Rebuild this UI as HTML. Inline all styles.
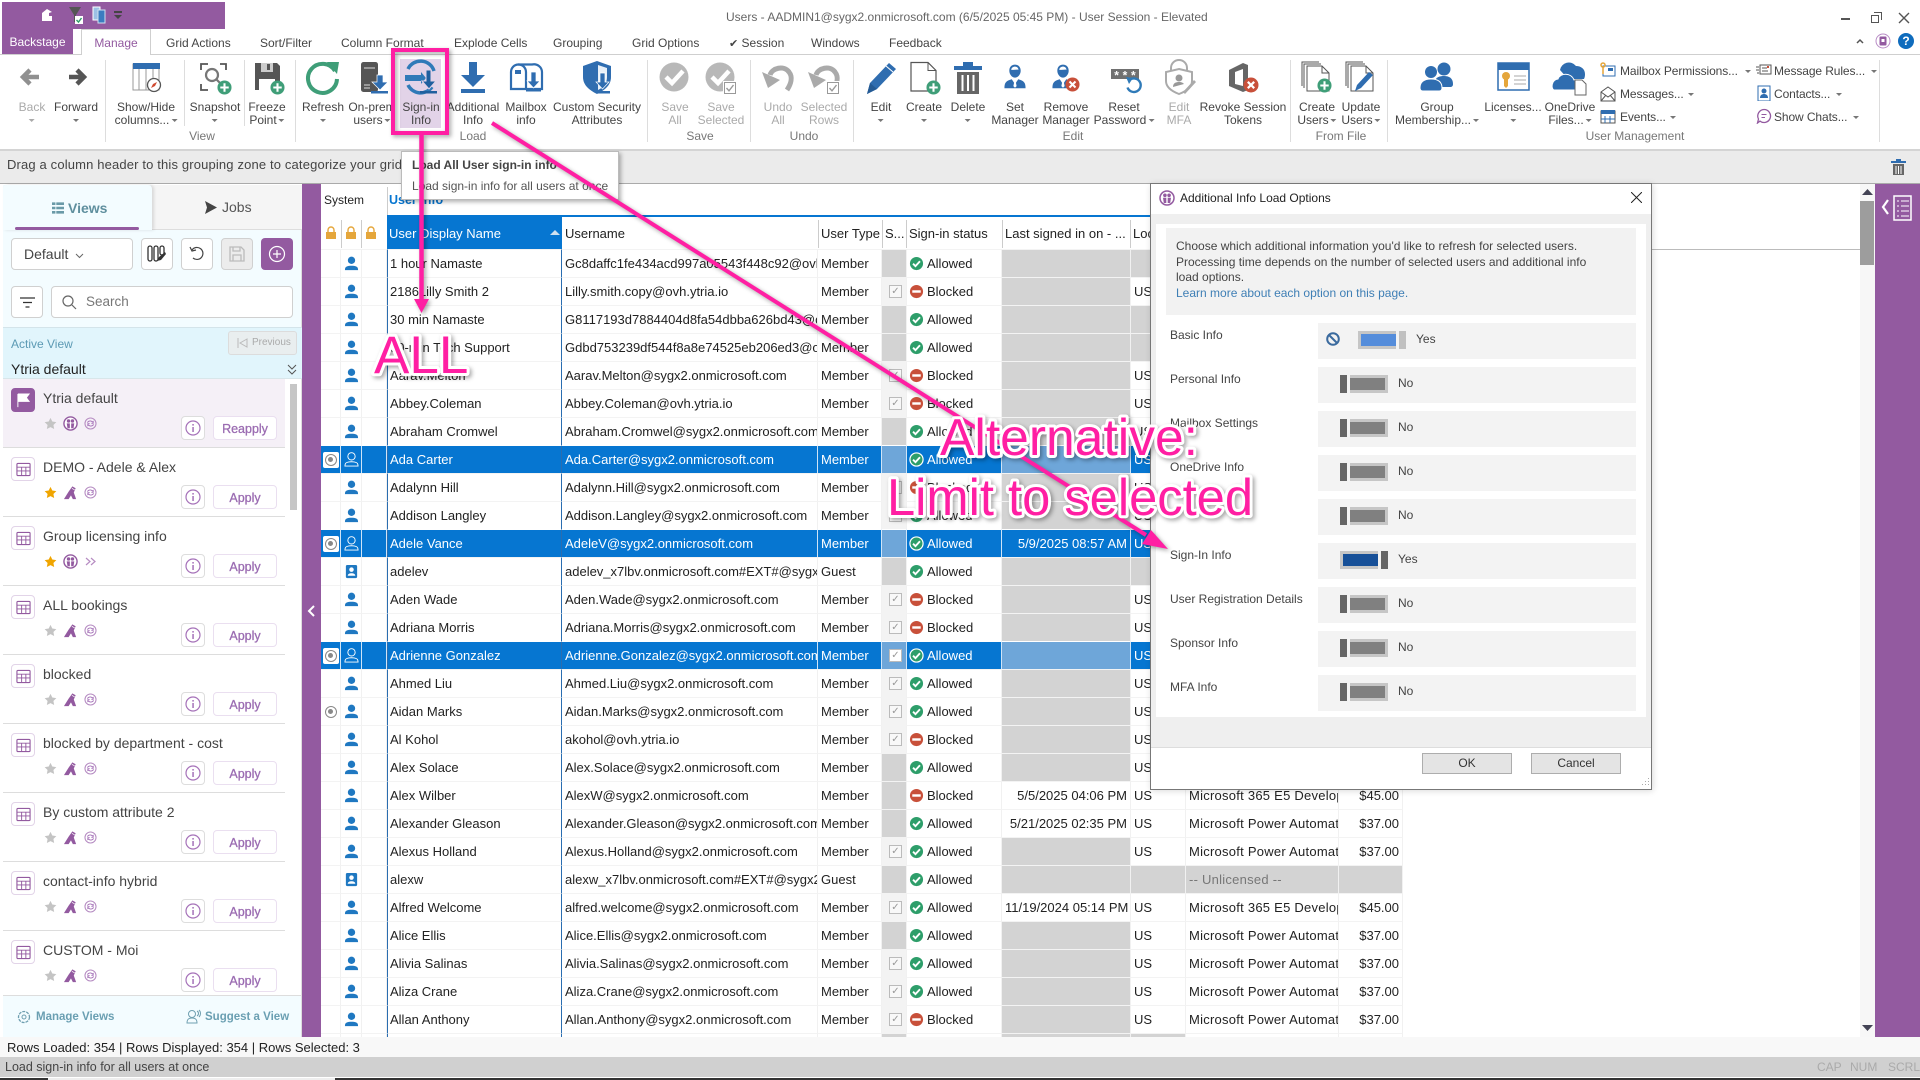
<!DOCTYPE html>
<html><head><meta charset="utf-8"><title>Users - User Session</title>
<style>
*{box-sizing:border-box}
html,body{margin:0;padding:0;width:1920px;height:1080px;overflow:hidden;background:#fff;font-family:"Liberation Sans",sans-serif;color:#333}
.a{position:absolute}
.t{position:absolute;font-size:12px;white-space:nowrap;color:#444;line-height:14px;letter-spacing:-.1px}
.tab{position:absolute;top:36px;font-size:12px;color:#444;line-height:14px;white-space:nowrap}
.l{position:absolute;top:101px;transform:translateX(-50%);text-align:center;line-height:13px;font-size:12px;color:#444;white-space:nowrap}
.d{color:#aaa}
.cr{display:inline-block;width:0;height:0;border:3px solid transparent;border-top:3px solid #777;border-bottom:0;margin-left:2px;vertical-align:middle}
.ic{position:absolute;top:58px;width:40px;height:40px}
.sep{position:absolute;top:60px;height:82px;width:1px;background:#ddd}
.gl{position:absolute;top:129px;font-size:12px;color:#777;transform:translateX(-50%);line-height:14px;white-space:nowrap}
.r{display:grid;grid-template-columns:20px 21px 25px 175px 256px 64px 25px 95px 129px 55px 153px 64px;height:28px;font-size:13px;color:#222}
.r p{margin:0;padding:0 3px;line-height:27px;white-space:nowrap;overflow:hidden;position:relative;border-right:1px solid #f1f1f1;border-top:1px solid #f3f3f3}
.r p:nth-child(4){border-left:1px solid #2a6db0;border-right:1px solid #2a6db0;padding-left:2px}
.r p:nth-child(11){letter-spacing:.25px}
.r svg{position:absolute;width:15px;height:15px;left:3px;top:6px}
.r .st{padding-left:20px}
.r .st svg{left:2px}
.r .g{background:#d3d3d3}
.r .cb{background:#f3f3f3}
.r .cb i{position:absolute;left:7px;top:7px;width:13px;height:13px;border:1px solid #bbb;background:#f8f8f8;font:normal 10px/11px "DejaVu Sans",sans-serif;color:#999;text-align:center}
.r .rt{text-align:right}
.r .pi{fill:#1f78c1}
.s{color:#fff!important}
.s p{background:#0676d1;color:#fff;border-top:1px solid #fff;border-right:1px solid #cfe4f7}
.s .g,.s .cb{background:#6ea6d9}
.s .pi{fill:none;stroke:#fff}
.s .cb i{background:#fff}
.ra{position:absolute;left:2px;top:6px;width:16px;height:16px;background:#fff;border-radius:2px}
.ra b{position:absolute;left:2px;top:2px;width:12px;height:12px;border:1.5px solid #888;border-radius:50%}
.ra b:after{content:"";position:absolute;left:2px;top:2px;width:5px;height:5px;background:#888;border-radius:50%}
.btn{position:absolute;border:1px solid #d0d0d0;border-radius:4px;background:#fff}
.it{position:absolute;left:3px;width:282px;height:69px;border-bottom:1px solid #ddd;background:#fff}
.it .ib{position:absolute;left:8px;top:9px;width:24px;height:24px;border:1px solid #e2d4e8;border-radius:4px;background:#fff}
.it .ib svg{position:absolute;left:4px;top:4px;width:15px;height:15px}
.it .ti{position:absolute;left:40px;top:11px;font-size:14px;line-height:17px;color:#444;white-space:nowrap}
.it .s1,.it .s3{position:absolute;top:38px;width:13px;height:13px}
.it .s2{position:absolute;top:37px;width:15px;height:15px}
.it .s1{left:41px}.it .s2{left:60px}.it .s3{left:81px}
.it .nf{position:absolute;left:178px;top:37px;width:24px;height:24px;border:1px solid #ddd;border-radius:4px;background:#fff}
.it .nf svg{position:absolute;left:3px;top:3px;width:16px;height:16px}
.it .ap{position:absolute;left:210px;top:37px;width:64px;height:24px;border:1px solid #eadff0;border-radius:4px;background:#fff;text-align:center;color:#9b6cb2;font-size:12.500px;-webkit-text-stroke:.3px #9b6cb2;line-height:24px}
.lbl{position:absolute;left:1170px;font-size:12px;color:#444;line-height:14px;white-space:nowrap}
.box{position:absolute;left:1318px;width:318px;height:36px;background:#f3f3f3}
.ho{position:absolute;left:22px;top:8px;width:7px;height:18px;background:#666}
.tr{position:absolute;left:32px;top:8px;width:38px;height:18px;background:#c6c6c6}
.tr i{position:absolute;left:0;top:3px;width:35px;height:12px;background:#808080}
.val{position:absolute;left:80px;top:9px;font-size:12px;line-height:14px;color:#444}
.sm{position:absolute;width:16px;height:16px}
</style></head><body>
<svg width="0" height="0" style="position:absolute">
<defs>
<symbol id="u" viewBox="0 0 16 16"><circle cx="8" cy="4.600" r="3.900"/><path d="M1 15c0-2 .5-3.200 2-3.800 1.400-.6 3-.8 5-.8s3.600.2 5 .8c1.500.6 2 1.800 2 3.800z"/></symbol>
<symbol id="gu" viewBox="0 0 16 16"><rect x="2" y="1" width="12" height="14" rx="1.500" fill="#1f78c1"/><circle cx="8" cy="6" r="2.400" fill="#fff"/><path d="M4 12.500c0-2 2-2.700 4-2.700s4 .7 4 2.700z" fill="#fff"/></symbol>
<symbol id="ok" viewBox="0 0 16 16"><circle cx="8" cy="8" r="7" fill="#2e9e6a"/><path d="M4.300 8.200l2.600 2.600 4.800-5.200" fill="none" stroke="#fff" stroke-width="2"/></symbol>
<symbol id="oks" viewBox="0 0 16 16"><circle cx="8" cy="8" r="7" fill="#2e9e6a" stroke="#fff" stroke-width="1.300"/><path d="M4.300 8.200l2.600 2.600 4.800-5.200" fill="none" stroke="#fff" stroke-width="2"/></symbol>
<symbol id="bl" viewBox="0 0 16 16"><circle cx="8" cy="8" r="7" fill="#c8503a"/><rect x="3.500" y="6.700" width="9" height="2.600" fill="#fff"/></symbol>
<symbol id="star" viewBox="0 0 16 16"><path d="M8 1l2.200 4.600 5 .7-3.600 3.500.9 5L8 12.400l-4.500 2.400.9-5L.8 6.300l5-.7z"/></symbol>
<symbol id="pen" viewBox="0 0 16 16"><path d="M1 15L6 7 10 1.500l3.500 2L11.500 8l2.500 7h-3.500L8.500 11 6 15z" fill="#935aa0"/><path d="M9.500 3.500l3 1.800" stroke="#fff" stroke-width=".7"/></symbol>
<symbol id="sy" viewBox="0 0 16 16"><circle cx="8" cy="8" r="6.800" fill="none" stroke="#b68cc2" stroke-width="1.300"/><path d="M4.300 7c.6-2 4-3 6-1l1-.6v2.400H9M11.700 9c-.6 2-4 3-6 1l-1 .6V8.200H7" fill="none" stroke="#a571b8" stroke-width="1.100"/></symbol>
<symbol id="pc" viewBox="0 0 16 16"><circle cx="8" cy="8" r="7" fill="#fff" stroke="#935aa0" stroke-width="1.500"/><circle cx="5.900" cy="5.300" r="1.800" fill="#935aa0"/><circle cx="10.100" cy="5.300" r="1.800" fill="#935aa0"/><path d="M4 7.800h3.300v5.200H4.800zM8.700 7.800H12l-.8 5.200H8.700z" fill="#935aa0"/></symbol>
<symbol id="tb" viewBox="0 0 16 16"><rect x="1" y="1.500" width="14" height="13" rx="1" fill="none" stroke="#935aa0" stroke-width="1.200"/><path d="M1 5.500h14M1 9.500h14M6 5.500v9M10.500 5.500v9" stroke="#935aa0" fill="none"/></symbol>
<symbol id="nfo" viewBox="0 0 16 16"><circle cx="8" cy="8" r="7" fill="none" stroke="#a571b8" stroke-width="1.200"/><rect x="7.300" y="7" width="1.500" height="5" fill="#a571b8"/><rect x="7.300" y="4" width="1.500" height="1.600" fill="#a571b8"/></symbol>
<symbol id="plus" viewBox="0 0 16 16"><circle cx="8" cy="8" r="7.500" fill="#3f9e78"/><path d="M8 3.500v9M3.500 8h9" stroke="#fff" stroke-width="2.200"/></symbol>
<symbol id="rx" viewBox="0 0 16 16"><circle cx="8" cy="8" r="7.500" fill="#c8503a"/><path d="M4.800 4.800l6.400 6.400M11.200 4.800l-6.400 6.400" stroke="#fff" stroke-width="2.200"/></symbol>
<symbol id="mn" viewBox="0 0 32 32"><path d="M16 2c4.500 0 7 3.200 7 7.500 0 4-3 8.500-7 8.500s-7-4.500-7-8.500C9 5.200 11.500 2 16 2zm0 2.500c-2.500 0-4.300 1.500-4.700 3.800 3.500.4 6.500-.3 9 0C20 6 18.500 4.500 16 4.500z" fill="#2f6db0"/><path d="M3 31c0-7 2-9 9-11l4 6 4-6c7 2 9 4 9 11z" fill="#2f6db0"/><path d="M14.500 20.500h3l-.5 3 1 5-2 2-2-2 1-5z" fill="#fff"/></symbol>
<symbol id="ck" viewBox="0 0 12 12"><rect x=".5" y=".5" width="11" height="11" fill="#fff" stroke="#999"/><path d="M2.500 6l2.500 2.800L9.500 3" fill="none" stroke="#999" stroke-width="1.400"/></symbol>
</defs>
</svg>

<!-- Title / tabs -->
<div class="a" style="left:2px;top:2px;width:223px;height:27px;background:#935aa0"></div>
<svg class="a" style="left:40px;top:6px" width="14" height="16"><path d="M2 15V7l5-4 5 3-3 1v3l3 0v5z" fill="#fff"/></svg>
<svg class="a" style="left:68px;top:5px" width="16" height="20"><path d="M1 2h12L8 10v7H6v-7z" fill="#555"/><rect x="7" y="11" width="8" height="8" fill="#fff"/><path d="M8.500 15l2 2 3-4" stroke="#2e9e6a" fill="none" stroke-width="1.400"/></svg>
<svg class="a" style="left:92px;top:6px" width="16" height="18"><rect x="1" y="1" width="7" height="13" fill="#9cc0e5" stroke="#fff"/><rect x="6" y="4" width="7" height="13" fill="#3b7cc0" stroke="#cfe0f0"/></svg>
<div class="a" style="left:114px;top:11px;width:8px;height:2px;background:#444"></div>
<div class="a" style="left:114px;top:15px;width:0;height:0;border:4px solid transparent;border-top:4px solid #444"></div>
<div class="a" style="left:726px;top:10px;width:468px;text-align:center;font-size:12px;line-height:14px;color:#666;white-space:nowrap">Users - AADMIN1@sygx2.onmicrosoft.com (6/5/2025 05:45 PM) - User Session - Elevated</div>

<div class="a" style="left:2px;top:29px;width:71px;height:25px;background:#935aa0;color:#fff;font-size:12px;line-height:26px;text-align:center">Backstage</div>
<div class="a" style="left:0;top:54px;width:1920px;height:1px;background:#cfcfcf"></div>
<div class="a" style="left:81px;top:29px;width:70px;height:26px;background:#fff;border:1px solid #cfcfcf;border-bottom:0;color:#935aa0;font-size:12px;line-height:27px;text-align:center">Manage</div>
<div class="tab" style="left:166px">Grid Actions</div>
<div class="tab" style="left:260px">Sort/Filter</div>
<div class="tab" style="left:341px">Column Format</div>
<div class="tab" style="left:454px">Explode Cells</div>
<div class="tab" style="left:553px">Grouping</div>
<div class="tab" style="left:632px">Grid Options</div>
<div class="tab" style="left:729px"><span style="font-family:'DejaVu Sans';font-size:11px">✔</span> Session</div>
<div class="tab" style="left:811px">Windows</div>
<div class="tab" style="left:889px">Feedback</div>

<!-- window buttons -->
<div class="a" style="left:1841px;top:18px;width:9px;height:2px;background:#555"></div>
<div class="a" style="left:1871px;top:15px;width:8px;height:8px;border:1px solid #555;background:#fff"></div>
<div class="a" style="left:1874px;top:12px;width:8px;height:8px;border:1px solid #555;border-left:0;border-bottom:0"></div>
<svg class="a" style="left:1898px;top:12px" width="12" height="12"><path d="M1 1l10 10M11 1L1 11" stroke="#555" stroke-width="1.400"/></svg>
<svg class="a" style="left:1856px;top:38px" width="8" height="6"><path d="M1 5l3-3 3 3" stroke="#555" fill="none" stroke-width="1.500"/></svg>
<svg class="a" style="left:1875px;top:33px" width="16" height="16"><circle cx="8" cy="8" r="7" fill="#fff" stroke="#b98cc6"/><rect x="4.500" y="3.500" width="7" height="9" rx="1" fill="#935aa0"/><rect x="6.500" y="6" width="3" height="3" fill="#fff"/></svg>
<div class="a" style="left:1898px;top:33px;width:16px;height:16px;border-radius:50%;background:#0f6cbd;color:#fff;font-size:12px;font-weight:bold;line-height:16px;text-align:center">?</div>

<!-- Ribbon separators -->
<div class="sep" style="left:105px"></div><div class="sep" style="left:184px;height:66px"></div><div class="sep" style="left:244px;height:66px"></div><div class="sep" style="left:295px"></div>
<div class="sep" style="left:647px"></div><div class="sep" style="left:750px"></div><div class="sep" style="left:853px"></div><div class="sep" style="left:1290px"></div><div class="sep" style="left:1387px"></div><div class="sep" style="left:1879px"></div>
<div class="a" style="left:0;top:149px;width:1920px;height:2px;background:#d4d4d4"></div>

<div class="a" style="left:400px;top:59px;width:41px;height:69px;background:#e2d3e8"></div>

<!-- Ribbon icons -->
<svg class="ic" style="left:10px" viewBox="0 0 40 40"><path d="M29 19H14M20 12l-7 7 7 7" fill="none" stroke="#909090" stroke-width="4.500"/></svg>
<svg class="ic" style="left:57px" viewBox="0 0 40 40"><path d="M12 19h15M20 12l7 7-7 7" fill="none" stroke="#555" stroke-width="4.500"/></svg>
<svg class="ic" style="left:126px" viewBox="0 0 40 40"><rect x="7" y="6" width="26" height="26" fill="#fff" stroke="#999"/><rect x="7" y="5" width="27" height="6" fill="#2f6db0"/><path d="M13 11v21M20 11v21M27 11v14" stroke="#999"/><circle cx="28" cy="27" r="6.500" fill="#fff" stroke="#555" stroke-width="1.300"/><path d="M25 30l2-4 4-2-2 4z" fill="#d0492f"/></svg>
<svg class="ic" style="left:195px" viewBox="0 0 40 40"><path d="M6 12V6h7M25 6h6v6M6 26v6h7" fill="none" stroke="#555" stroke-width="1.800"/><circle cx="17" cy="17" r="6" fill="none" stroke="#777" stroke-width="2.200"/><path d="M21 21l4 4" stroke="#777" stroke-width="2.200"/><use href="#plus" x="22" y="22" width="15" height="15"/></svg>
<svg class="ic" style="left:247px" viewBox="0 0 40 40"><path d="M8 5h22l3 3v24H8z" fill="#555"/><rect x="14" y="5" width="12" height="9" fill="#ccc"/><rect x="20" y="6" width="3" height="6" fill="#555"/><rect x="12" y="21" width="16" height="11" fill="#fff"/><use href="#plus" x="23" y="22" width="15" height="15"/></svg>
<svg class="ic" style="left:303px" viewBox="0 0 40 40"><path d="M32 13A14.500 14.500 0 1 0 34 21" fill="none" stroke="#3f9e78" stroke-width="4"/><path d="M24 4l12 0-2 12z" fill="#3f9e78"/></svg>
<svg class="ic" style="left:352px" viewBox="0 0 40 40"><rect x="9" y="4" width="17" height="30" rx="2.500" fill="#555"/><path d="M12 10h11M12 27h6M12 30h6" stroke="#ddd"/><path d="M25 17h6v7h5l-8 8-8-8h5z" fill="#2f6db0" stroke="#fff" stroke-width=".7"/><rect x="19" y="33" width="17" height="2.500" fill="#2f6db0"/></svg>
<svg class="ic" style="left:401px" viewBox="0 0 40 40"><path d="M7 11A14 14 0 0 1 33 13M31 29A14 14 0 0 1 7 27" fill="none" stroke="#2f7ab8" stroke-width="3.500"/><path d="M4 17h16v-3l5 6-5 6v-3H4z" fill="#2f7ab8"/><path d="M25 12h5v11h5l-7 8-7-8h4z" fill="#1f5f9e" stroke="#e2d3e8"/><rect x="19" y="33" width="17" height="2.500" fill="#1f5f9e"/></svg>
<svg class="ic" style="left:453px" viewBox="0 0 40 40"><path d="M16 4h8v13h8L20 29 8 17h8z" fill="#2f6db0"/><rect x="8" y="31" width="24" height="4" fill="#2f6db0"/></svg>
<svg class="ic" style="left:506px" viewBox="0 0 40 40"><path d="M5 31V14a7.500 7.500 0 0 1 15 0v17z" fill="#fff" stroke="#2f6db0" stroke-width="2.200"/><path d="M12 6.500h14A8 8 0 0 1 36 14v17H20" fill="none" stroke="#2f6db0" stroke-width="2.200"/><rect x="9" y="12" width="6" height="4" fill="#2f6db0"/><path d="M25 14h5v9h4l-6.500 7-6.500-7h4z" fill="#2f6db0" stroke="#fff" stroke-width=".7"/><rect x="20" y="31" width="15" height="2.500" fill="#2f6db0"/></svg>
<svg class="ic" style="left:577px" viewBox="0 0 40 40"><path d="M20 3l14 5v11c0 8-6 13-14 17-8-4-14-9-14-17V8z" fill="#2f6db0"/><path d="M21 7l9 3v9c0 6-3 10-9 13z" fill="#e8f0f8"/><path d="M23 15h5v9h4l-6.500 7-6.500-7h4z" fill="#2f6db0" stroke="#fff" stroke-width=".7"/><rect x="19" y="33" width="14" height="2.500" fill="#2f6db0"/></svg>

<svg class="ic" style="left:655px" viewBox="0 0 40 40"><circle cx="19" cy="19" r="14.500" fill="#b8b8b8"/><path d="M11 19l6 6 11-12" fill="none" stroke="#fff" stroke-width="4.500"/></svg>
<svg class="ic" style="left:701px" viewBox="0 0 40 40"><circle cx="19" cy="19" r="14.500" fill="#b8b8b8"/><path d="M11 19l6 6 11-12" fill="none" stroke="#fff" stroke-width="4.500"/><rect x="22" y="23" width="14" height="14" fill="#fff"/><use href="#ck" x="23" y="24" width="12" height="12"/></svg>
<svg class="ic" style="left:758px" viewBox="0 0 40 40"><path d="M12 17c2-7 14-10 19-3 4 5 2 12-2 18" fill="none" stroke="#aaa" stroke-width="5"/><path d="M4 14l6 16 12-8z" fill="#aaa"/></svg>
<svg class="ic" style="left:804px" viewBox="0 0 40 40"><path d="M12 17c2-7 14-10 19-3 4 5 2 12-2 18" fill="none" stroke="#aaa" stroke-width="5"/><path d="M4 14l6 16 12-8z" fill="#aaa"/><rect x="22" y="23" width="14" height="14" fill="#fff"/><use href="#ck" x="23" y="24" width="12" height="12"/></svg>
<svg class="ic" style="left:861px" viewBox="0 0 40 40"><path d="M6 36l3-11L28 5l7 6-19 20z" fill="#2f6db0"/><path d="M6 36l3-11 7 6z" fill="#245a94"/><path d="M25 8l7 6" stroke="#fff"/></svg>
<svg class="ic" style="left:904px" viewBox="0 0 40 40"><path d="M7 4.500h17l8 8V33H7z" fill="#fff" stroke="#555" stroke-width="1.200"/><path d="M24 4.500v8h8" fill="none" stroke="#555"/><use href="#plus" x="22" y="22" width="15" height="15"/></svg>
<svg class="ic" style="left:948px" viewBox="0 0 40 40"><rect x="6" y="8" width="28" height="4" fill="#2f6db0"/><rect x="15" y="4" width="10" height="4" fill="#2f6db0"/><rect x="9" y="14" width="22" height="22" fill="#666"/><path d="M14.500 17v16M20 17v16M25.500 17v16" stroke="#fff" stroke-width="2"/></svg>
<svg class="ic" style="left:995px" viewBox="0 0 40 40"><use href="#mn" x="7" y="5" width="26" height="26"/></svg>
<svg class="ic" style="left:1046px" viewBox="0 0 40 40"><use href="#mn" x="4" y="5" width="26" height="26"/><use href="#rx" x="19" y="19" width="15" height="15"/></svg>
<svg class="ic" style="left:1104px" viewBox="0 0 40 40"><rect x="7" y="11" width="28" height="10" fill="#707070"/><text x="9" y="22" font-family="Liberation Mono,monospace" font-size="12" font-weight="bold" fill="#fff" textLength="24">***</text><path d="M25 22.500a6.800 6.800 0 1 1-1.500 7" fill="none" stroke="#2f7ab8" stroke-width="2.400"/><path d="M22 19l7 1-4 6z" fill="#2f7ab8"/></svg>
<svg class="ic" style="left:1159px" viewBox="0 0 40 40"><path d="M12 13V10a8 8 0 0 1 16 0v3" fill="none" stroke="#aaa" stroke-width="2"/><path d="M20 11l13 3v9c0 6-5 10-13 13-8-3-13-7-13-13v-9z" fill="#fff" stroke="#aaa" stroke-width="2"/><circle cx="20" cy="20" r="3.500" fill="#999"/><path d="M14 29c0-4 3-5 6-5 3 0 4 1 5 2" fill="#999"/><path d="M24 34l11-12 2 2-11 12z" fill="#aaa"/></svg>
<svg class="ic" style="left:1223px" viewBox="0 0 40 40"><path d="M6 12L20 5l5 2v25l-5 2L6 28zM12 14v12l8 2V11z" fill="#666" fill-rule="evenodd"/><use href="#rx" x="20" y="19" width="16" height="16"/></svg>

<svg class="ic" style="left:1297px" viewBox="0 0 40 40"><path d="M5 28V4h17M7 30V6h17" fill="none" stroke="#555"/><path d="M10 8h15l7 7v18H10z" fill="#fff" stroke="#555"/><path d="M25 8v7h7" fill="none" stroke="#555"/><use href="#plus" x="20" y="20" width="15" height="15"/></svg>
<svg class="ic" style="left:1341px" viewBox="0 0 40 40"><path d="M5 28V4h17M7 30V6h17" fill="none" stroke="#555"/><path d="M10 8h15l7 7v18H10z" fill="#fff" stroke="#555"/><path d="M25 8v7h7" fill="none" stroke="#555"/><path d="M14 33l2-6 12-13 4 3-12 13z" fill="#2f6db0"/></svg>
<svg class="ic" style="left:1417px" viewBox="0 0 40 40"><circle cx="14" cy="14" r="6" fill="#2f6db0"/><circle cx="27" cy="11" r="6.500" fill="#2f6db0"/><path d="M18 23c1-4 5-5 9-5 5 0 9 2 9 8 0 2-1 3-3 3H23z" fill="#2f6db0"/><path d="M3 30c0-7 5-9 11-9s11 2 11 9c0 2-1 3-3 3H6c-2 0-3-1-3-3z" fill="#2f6db0" stroke="#fff"/></svg>
<svg class="ic" style="left:1493px" viewBox="0 0 40 40"><rect x="5" y="5" width="31" height="27" fill="#fff" stroke="#2f6db0" stroke-width="1.500"/><rect x="5" y="5" width="31" height="7" fill="#2f6db0"/><circle cx="13" cy="18" r="4" fill="#e5a63b"/><path d="M11 20h4v8l-2 2-2-2z" fill="#e5a63b"/><path d="M21 18h12M21 22h12M21 26h12" stroke="#bbb" stroke-width="1.300"/></svg>
<svg class="ic" style="left:1550px" viewBox="0 0 40 40"><path d="M10 12a9 9 0 0 1 16-4c5 0 9 3 9 8 0 1 0 3-1 5H18z" fill="#2f6db0"/><path d="M4 32c-3-1-3-10 4-11 2-6 13-7 16 1 6-1 8 5 6 10z" fill="#2f6db0" stroke="#fff"/><path d="M25 22h7l4 4v11H25z" fill="#fff" stroke="#666"/></svg>

<!-- small ribbon icons -->
<svg class="sm" style="left:1600px;top:62px" viewBox="0 0 16 16"><rect x="3" y="4" width="12" height="10" fill="#fff" stroke="#2f6db0"/><rect x="8" y="6" width="5" height="3" fill="#2f6db0"/><circle cx="3" cy="3" r="2" fill="none" stroke="#e5a63b" stroke-width="1.500"/><path d="M3 5v7" stroke="#e5a63b" stroke-width="1.500"/></svg>
<svg class="sm" style="left:1600px;top:86px" viewBox="0 0 16 16"><path d="M1 6l7-5 7 5v9H1z" fill="#fff" stroke="#555"/><path d="M1 6l7 5 7-5M1 15l5-6M15 15l-5-6" fill="none" stroke="#555"/></svg>
<svg class="sm" style="left:1600px;top:108px" viewBox="0 0 16 16"><rect x="1" y="3" width="14" height="12" fill="#fff" stroke="#555"/><rect x="1" y="2" width="14" height="4" fill="#2f6db0"/><path d="M5 8v7M10 8v7M1 11h14" stroke="#2f6db0"/></svg>
<svg class="sm" style="left:1756px;top:62px" viewBox="0 0 16 16"><rect x="4" y="3" width="11" height="9" fill="#fff" stroke="#555"/><path d="M0 5h3M0 8h3M1 11h2M6 6h5M6 9h6" stroke="#555"/><rect x="11" y="4" width="2" height="2" fill="#c8503a"/></svg>
<svg class="sm" style="left:1756px;top:85px" viewBox="0 0 16 16"><rect x="2" y="1" width="12" height="15" fill="#fff" stroke="#2f6db0"/><circle cx="8" cy="6" r="2.500" fill="#2f6db0"/><path d="M4 13c0-3 2-4 4-4s4 1 4 4z" fill="#2f6db0"/></svg>
<svg class="sm" style="left:1756px;top:108px" viewBox="0 0 16 16"><path d="M8 1.500a6.500 6.500 0 1 1-4 11.600L1.500 15 2.500 11A6.500 6.500 0 0 1 8 1.500z" fill="#fff" stroke="#935aa0" stroke-width="1.300"/><path d="M5.500 6.500h5M5.500 9.500h3.500" stroke="#935aa0"/></svg>

<!-- Ribbon labels -->
<div class="l d" style="left:32px">Back<br><i class="cr" style="border-top-color:#aaa;margin:0"></i></div>
<div class="l" style="left:76px">Forward<br><i class="cr" style="margin:0"></i></div>
<div class="l" style="left:146px">Show/Hide<br>columns...<i class="cr"></i></div>
<div class="l" style="left:215px">Snapshot<br><i class="cr" style="margin:0"></i></div>
<div class="l" style="left:267px">Freeze<br>Point<i class="cr"></i></div>
<div class="l" style="left:323px">Refresh<br><i class="cr" style="margin:0"></i></div>
<div class="l" style="left:372px">On-prem<br>users<i class="cr"></i></div>
<div class="l" style="left:421px">Sign-in<br>Info</div>
<div class="l" style="left:473px">Additional<br>Info</div>
<div class="l" style="left:526px">Mailbox<br>info</div>
<div class="l" style="left:597px">Custom Security<br>Attributes</div>
<div class="l d" style="left:675px">Save<br>All</div>
<div class="l d" style="left:721px">Save<br>Selected</div>
<div class="l d" style="left:778px">Undo<br>All</div>
<div class="l d" style="left:824px">Selected<br>Rows</div>
<div class="l" style="left:881px">Edit<br><i class="cr" style="margin:0"></i></div>
<div class="l" style="left:924px">Create<br><i class="cr" style="margin:0"></i></div>
<div class="l" style="left:968px">Delete<br><i class="cr" style="margin:0"></i></div>
<div class="l" style="left:1015px">Set<br>Manager</div>
<div class="l" style="left:1066px">Remove<br>Manager</div>
<div class="l" style="left:1124px">Reset<br>Password<i class="cr"></i></div>
<div class="l d" style="left:1179px">Edit<br>MFA</div>
<div class="l" style="left:1243px">Revoke Session<br>Tokens</div>
<div class="l" style="left:1317px">Create<br>Users<i class="cr"></i></div>
<div class="l" style="left:1361px">Update<br>Users<i class="cr"></i></div>
<div class="l" style="left:1437px">Group<br>Membership...<i class="cr"></i></div>
<div class="l" style="left:1513px">Licenses...<br><i class="cr" style="margin:0"></i></div>
<div class="l" style="left:1570px">OneDrive<br>Files...<i class="cr"></i></div>
<div class="t" style="left:1620px;top:64px">Mailbox Permissions...<i class="cr" style="margin-left:7px"></i></div>
<div class="t" style="left:1620px;top:87px">Messages...<i class="cr" style="margin-left:4px"></i></div>
<div class="t" style="left:1620px;top:110px">Events...<i class="cr" style="margin-left:4px"></i></div>
<div class="t" style="left:1774px;top:64px">Message Rules...<i class="cr" style="margin-left:6px"></i></div>
<div class="t" style="left:1774px;top:87px">Contacts...<i class="cr" style="margin-left:6px"></i></div>
<div class="t" style="left:1774px;top:110px">Show Chats...<i class="cr" style="margin-left:6px"></i></div>
<div class="gl" style="left:202px">View</div><div class="gl" style="left:473px">Load</div><div class="gl" style="left:700px">Save</div><div class="gl" style="left:804px">Undo</div><div class="gl" style="left:1073px">Edit</div><div class="gl" style="left:1341px">From File</div><div class="gl" style="left:1635px">User Management</div>

<!-- Grouping zone -->
<div class="a" style="left:0;top:151px;width:1920px;height:33px;background:#ebebeb;border-bottom:1px solid #aaa"></div>
<div class="a" style="left:7px;top:157px;font-size:13px;line-height:16px;color:#444;white-space:nowrap;width:395px;overflow:hidden;letter-spacing:.15px">Drag a column header to this grouping zone to categorize your grid</div>
<svg class="a" style="left:1890px;top:158px" width="17" height="18" viewBox="0 0 17 18"><rect x="1" y="3" width="15" height="2" fill="#2f6db0"/><rect x="6" y="1" width="5" height="2" fill="#2f6db0"/><rect x="3" y="6" width="11" height="11" fill="#666"/><path d="M6 8v8M8.500 8v8M11 8v8" stroke="#fff"/></svg>

<!-- Left panel -->
<div class="a" style="left:3px;top:185px;width:299px;height:852px;background:#f3fcff;border-right:1px solid #ddd"></div>
<div class="a" style="left:151px;top:185px;width:151px;height:45px;background:#f5f5f5;border-bottom:1px solid #ddd"></div>
<div class="a" style="left:3px;top:185px;width:149px;height:45px;background:#f3fcff;border-radius:4px 4px 0 0;box-shadow:2px 0 3px rgba(0,0,0,.12)"></div>
<div class="a" style="left:15px;top:227px;width:124px;height:3px;background:#935aa0;border-radius:2px"></div>
<svg class="a" style="left:52px;top:202px" width="12" height="12" viewBox="0 0 14 13"><path d="M0 0h4v3H0zM5 0h9v3H5zM0 5h4v3H0zM5 5h9v3H5zM0 10h4v3H0zM5 10h9v3H5z" fill="#6a9aa8"/></svg>
<div class="a" style="left:68px;top:200px;font-size:14px;font-weight:bold;color:#5f8f9e;line-height:17px">Views</div>
<svg class="a" style="left:205px;top:201px" width="12" height="13"><path d="M0 0l12 6.500L0 13l2-6.500z" fill="#444"/></svg>
<div class="a" style="left:222px;top:199px;font-size:14px;color:#555;line-height:17px">Jobs</div>

<div class="btn" style="left:11px;top:238px;width:122px;height:32px"></div>
<div class="a" style="left:24px;top:246px;font-size:14px;line-height:17px;color:#444">Default</div>
<svg class="a" style="left:75px;top:253px" width="9" height="6"><path d="M1 1l3.500 3.500L8 1" stroke="#666" fill="none"/></svg>
<div class="btn" style="left:141px;top:238px;width:32px;height:32px"></div>
<svg class="a" style="left:147px;top:245px" width="20" height="18"><rect x="1" y="1" width="4" height="15" rx="2" fill="none" stroke="#333" stroke-width="1.300"/><rect x="7" y="1" width="4" height="15" rx="2" fill="none" stroke="#333" stroke-width="1.300"/><rect x="13" y="1" width="4" height="9" rx="2" fill="none" stroke="#333" stroke-width="1.300"/><path d="M10 16l2-4 6-5 1 2-5 6z" fill="#333"/></svg>
<div class="btn" style="left:181px;top:238px;width:32px;height:32px"></div>
<svg class="a" style="left:189px;top:245px" width="16" height="17"><path d="M3 5a6 6 0 1 1 1 8" fill="none" stroke="#444" stroke-width="1.200"/><path d="M1 2l2 4 4-1" fill="none" stroke="#444" stroke-width="1.200"/></svg>
<div class="btn" style="left:221px;top:238px;width:32px;height:32px;background:#ececec"></div>
<svg class="a" style="left:229px;top:246px" width="16" height="16"><path d="M1 1h11l3 3v11H1z" fill="none" stroke="#bbb" stroke-width="1.300"/><path d="M4 1v4h7V1M4 15V9h8v6" fill="none" stroke="#bbb" stroke-width="1.300"/></svg>
<div class="a" style="left:261px;top:238px;width:32px;height:32px;background:#935aa0;border-radius:4px"></div>
<svg class="a" style="left:268px;top:245px" width="18" height="18"><circle cx="9" cy="9" r="7.500" fill="none" stroke="#fff" stroke-width="1.200"/><path d="M9 5v8M5 9h8" stroke="#fff" stroke-width="1.200"/></svg>
<div class="btn" style="left:11px;top:286px;width:32px;height:32px"></div>
<svg class="a" style="left:20px;top:297px" width="15" height="11"><path d="M0 1h15M3 5.500h9M5.500 10h4" stroke="#333" stroke-width="1.200"/></svg>
<div class="btn" style="left:51px;top:286px;width:242px;height:32px"></div>
<svg class="a" style="left:62px;top:295px" width="15" height="15"><circle cx="6" cy="6" r="5" fill="none" stroke="#666" stroke-width="1.200"/><path d="M10 10l4 4" stroke="#666" stroke-width="1.200"/></svg>
<div class="a" style="left:86px;top:294px;font-size:13.500px;line-height:16px;color:#777">Search</div>

<div class="a" style="left:3px;top:327px;width:299px;height:52px;background:#e1f5fc;border-top:1px solid #d4e4ea;border-bottom:1px solid #d8e6ea"></div>
<div class="a" style="left:11px;top:337px;font-size:12px;color:#5c9ab4;line-height:15px">Active View</div>
<div class="a" style="left:228px;top:331px;width:69px;height:24px;background:#e9eeef;border:1px solid #dcdcdc;border-radius:3px;font-size:10px;line-height:22px;color:#aaa;padding-left:23px">Previous</div>
<svg class="a" style="left:237px;top:338px" width="11" height="10"><path d="M1 0v10M10 1L3 5l7 4z" stroke="#bbb" fill="none"/></svg>
<div class="a" style="left:11px;top:361px;font-size:14px;line-height:17px;color:#222">Ytria default</div>
<svg class="a" style="left:287px;top:364px" width="10" height="11"><path d="M1 1l4 4 4-4M1 6l4 4 4-4" stroke="#555" fill="none"/></svg>

<!-- List -->
<div class="a" style="left:3px;top:379px;width:282px;height:616px;overflow:hidden;background:#fff;border-left:0">
<div class="it" style="left:0;top:0;background:#f5f0f7"><div class="ib" style="background:#935aa0;border-color:#935aa0"><svg viewBox="0 0 16 16"><path d="M2 1v14M2 1h12l-3 4 3 4H2" fill="#fff" stroke="#fff"/></svg></div><div class="ti">Ytria default</div><svg class="s1" fill="#c4c4c4"><use href="#star"/></svg><svg class="s2"><use href="#pc"/></svg><svg class="s3"><use href="#sy"/></svg><div class="nf"><svg><use href="#nfo"/></svg></div><div class="ap">Reapply</div></div>
<div class="it" style="left:0;top:69px"><div class="ib"><svg><use href="#tb"/></svg></div><div class="ti">DEMO - Adele &amp; Alex</div><svg class="s1" fill="#f0a500"><use href="#star"/></svg><svg class="s2"><use href="#pen"/></svg><svg class="s3"><use href="#sy"/></svg><div class="nf"><svg><use href="#nfo"/></svg></div><div class="ap">Apply</div></div>
<div class="it" style="left:0;top:138px"><div class="ib"><svg><use href="#tb"/></svg></div><div class="ti">Group licensing info</div><svg class="s1" fill="#f0a500"><use href="#star"/></svg><svg class="s2"><use href="#pc"/></svg><svg class="s3" viewBox="0 0 13 13"><path d="M2 3l4 3.500-4 3.500M7 3l4 3.500-4 3.500" fill="none" stroke="#b68cc2" stroke-width="1.200"/></svg><div class="nf"><svg><use href="#nfo"/></svg></div><div class="ap">Apply</div></div>
<div class="it" style="left:0;top:207px"><div class="ib"><svg><use href="#tb"/></svg></div><div class="ti">ALL bookings</div><svg class="s1" fill="#c4c4c4"><use href="#star"/></svg><svg class="s2"><use href="#pen"/></svg><svg class="s3"><use href="#sy"/></svg><div class="nf"><svg><use href="#nfo"/></svg></div><div class="ap">Apply</div></div>
<div class="it" style="left:0;top:276px"><div class="ib"><svg><use href="#tb"/></svg></div><div class="ti">blocked</div><svg class="s1" fill="#c4c4c4"><use href="#star"/></svg><svg class="s2"><use href="#pen"/></svg><svg class="s3"><use href="#sy"/></svg><div class="nf"><svg><use href="#nfo"/></svg></div><div class="ap">Apply</div></div>
<div class="it" style="left:0;top:345px"><div class="ib"><svg><use href="#tb"/></svg></div><div class="ti">blocked by department - cost</div><svg class="s1" fill="#c4c4c4"><use href="#star"/></svg><svg class="s2"><use href="#pen"/></svg><svg class="s3"><use href="#sy"/></svg><div class="nf"><svg><use href="#nfo"/></svg></div><div class="ap">Apply</div></div>
<div class="it" style="left:0;top:414px"><div class="ib"><svg><use href="#tb"/></svg></div><div class="ti">By custom attribute 2</div><svg class="s1" fill="#c4c4c4"><use href="#star"/></svg><svg class="s2"><use href="#pen"/></svg><svg class="s3"><use href="#sy"/></svg><div class="nf"><svg><use href="#nfo"/></svg></div><div class="ap">Apply</div></div>
<div class="it" style="left:0;top:483px"><div class="ib"><svg><use href="#tb"/></svg></div><div class="ti">contact-info hybrid</div><svg class="s1" fill="#c4c4c4"><use href="#star"/></svg><svg class="s2"><use href="#pen"/></svg><svg class="s3"><use href="#sy"/></svg><div class="nf"><svg><use href="#nfo"/></svg></div><div class="ap">Apply</div></div>
<div class="it" style="left:0;top:552px"><div class="ib"><svg><use href="#tb"/></svg></div><div class="ti">CUSTOM - Moi</div><svg class="s1" fill="#c4c4c4"><use href="#star"/></svg><svg class="s2"><use href="#pen"/></svg><svg class="s3"><use href="#sy"/></svg><div class="nf"><svg><use href="#nfo"/></svg></div><div class="ap">Apply</div></div>
</div>
<div class="a" style="left:285px;top:379px;width:16px;height:616px;background:#fff"></div>
<div class="a" style="left:290px;top:384px;width:7px;height:126px;background:#c6c6c6"></div>
<div class="a" style="left:3px;top:995px;width:298px;height:1px;background:#ddd"></div>
<svg class="a" style="left:17px;top:1010px" width="14" height="14"><circle cx="7" cy="7" r="5.500" fill="none" stroke="#6f9fb0" stroke-width="1.300" stroke-dasharray="3 1"/><circle cx="7" cy="7" r="2" fill="none" stroke="#6f9fb0"/></svg>
<div class="a" style="left:36px;top:1009px;font-size:11.500px;font-weight:bold;color:#6a9fb2;line-height:16px">Manage Views</div>
<svg class="a" style="left:186px;top:1009px" width="15" height="15"><circle cx="6" cy="5" r="3.500" fill="none" stroke="#6f9fb0"/><path d="M1 14c0-4 2-5 5-5s5 1 5 5zM11 2c2 1 2 4 0 5M13 1c2 2 2 5 0 7" fill="none" stroke="#6f9fb0"/></svg>
<div class="a" style="left:205px;top:1009px;font-size:11.500px;font-weight:bold;color:#6a9fb2;line-height:16px;white-space:nowrap">Suggest a View</div>

<!-- Purple bars -->
<div class="a" style="left:302px;top:184px;width:19px;height:853px;background:#935aa0"></div>
<svg class="a" style="left:307px;top:604px" width="9" height="14"><path d="M7 2L2 7l5 5" stroke="#fff" fill="none" stroke-width="2"/></svg>
<div class="a" style="left:1875px;top:184px;width:45px;height:853px;background:#935aa0"></div>
<svg class="a" style="left:1880px;top:194px" width="34" height="28"><path d="M8 6l-5 7 5 7" stroke="#fff" fill="none" stroke-width="2.200"/><rect x="14" y="2" width="17" height="24" fill="none" stroke="#fff" stroke-width="1.500"/><path d="M17 7h2M21 7h8M17 12h2M21 12h8M17 17h2M21 17h8M17 22h2M21 22h8" stroke="#fff"/></svg>
<div class="a" style="left:1860px;top:184px;width:15px;height:853px;background:#f7f7f7"></div>
<div class="a" style="left:1860px;top:201px;width:14px;height:64px;background:#9d9d9d"></div>
<svg class="a" style="left:1862px;top:188px" width="11" height="8"><path d="M0 7l5.500-6L11 7z" fill="#445"/></svg>
<svg class="a" style="left:1862px;top:1024px" width="11" height="8"><path d="M0 1l5.500 6L11 1z" fill="#445"/></svg>

<!-- Grid header -->
<div class="a" style="left:321px;top:184px;width:1539px;height:31px;background:#fff"></div>
<div class="a" style="left:324px;top:193px;font-size:12px;color:#222;line-height:14px">System</div>
<div class="a" style="left:387px;top:187px;width:1px;height:28px;background:#ccc"></div>
<div class="a" style="left:389px;top:193px;font-size:12.500px;font-weight:bold;color:#0676d1;line-height:14px">User Info</div>
<div class="a" style="left:387px;top:215px;width:800px;height:2px;background:#0676d1"></div>
<div class="a" style="left:321px;top:249px;width:1539px;height:1px;background:#bbb"></div>
<div class="a" style="left:387px;top:215px;width:175px;height:34px;background:#0676d1"></div>
<div class="a" style="left:389px;top:226px;font-size:13px;line-height:15px;color:#fff">User Display Name</div>
<svg class="a" style="left:550px;top:229px" width="10" height="7"><path d="M0 6l5-5 5 5z" fill="#cfe0ef"/></svg>
<div class="a" style="left:565px;top:226px;font-size:13px;line-height:15px;color:#222">Username</div>
<div class="a" style="left:821px;top:226px;font-size:13px;line-height:15px;color:#222">User Type</div>
<div class="a" style="left:885px;top:226px;font-size:13px;line-height:15px;color:#222">S...</div>
<div class="a" style="left:909px;top:226px;font-size:13px;line-height:15px;color:#222">Sign-in status</div>
<div class="a" style="left:1005px;top:226px;font-size:13px;line-height:15px;color:#222;white-space:nowrap">Last signed in on - ...</div>
<div class="a" style="left:1133px;top:226px;font-size:13px;line-height:15px;color:#222">Loc</div>
<div style="position:absolute;left:341px;top:220px;width:1px;height:28px;background:#ccc"></div><div style="position:absolute;left:361px;top:220px;width:1px;height:28px;background:#ccc"></div><div style="position:absolute;left:818px;top:220px;width:1px;height:28px;background:#ccc"></div><div style="position:absolute;left:882px;top:220px;width:1px;height:28px;background:#ccc"></div><div style="position:absolute;left:906px;top:220px;width:1px;height:28px;background:#ccc"></div><div style="position:absolute;left:1002px;top:220px;width:1px;height:28px;background:#ccc"></div><div style="position:absolute;left:1130px;top:220px;width:1px;height:28px;background:#ccc"></div>
<svg class="a" style="left:326px;top:226px" width="10" height="13"><path d="M2 6V4a3 3 0 0 1 6 0v2" stroke="#e5a63b" fill="none" stroke-width="1.400"/><rect x="0" y="6" width="10" height="7" fill="#e5a63b"/></svg>
<svg class="a" style="left:346px;top:226px" width="10" height="13"><path d="M2 6V4a3 3 0 0 1 6 0v2" stroke="#e5a63b" fill="none" stroke-width="1.400"/><rect x="0" y="6" width="10" height="7" fill="#e5a63b"/></svg>
<svg class="a" style="left:366px;top:226px" width="10" height="13"><path d="M2 6V4a3 3 0 0 1 6 0v2" stroke="#e5a63b" fill="none" stroke-width="1.400"/><rect x="0" y="6" width="10" height="7" fill="#e5a63b"/></svg>

<!-- Grid rows -->
<div class="a" style="left:321px;top:249px;width:1082px;height:788px;overflow:hidden">
<div class="r"><p><p class="pi"><svg><use href="#u"/></svg><p><p>1 hour Namaste<p>Gc8daffc1fe434acd997a05543f448c92@ovh.ytria.io<p>Member<p class="g"><p class="st"><svg><use href="#ok"/></svg>Allowed<p class="g"><p class="g"><p><p></div>
<div class="r"><p><p class="pi"><svg><use href="#u"/></svg><p><p>2186Lilly Smith 2<p>Lilly.smith.copy@ovh.ytria.io<p>Member<p class="cb"><i>✓</i><p class="st"><svg><use href="#bl"/></svg>Blocked<p class="g"><p>US<p><p></div>
<div class="r"><p><p class="pi"><svg><use href="#u"/></svg><p><p>30 min Namaste<p>G8117193d7884404d8fa54dbba626bd43@ovh.ytria.io<p>Member<p class="g"><p class="st"><svg><use href="#ok"/></svg>Allowed<p class="g"><p class="g"><p><p></div>
<div class="r"><p><p class="pi"><svg><use href="#u"/></svg><p><p>30-min Tech Support<p>Gdbd753239df544f8a8e74525eb206ed3@ovh.ytria.io<p>Member<p class="g"><p class="st"><svg><use href="#ok"/></svg>Allowed<p class="g"><p class="g"><p><p></div>
<div class="r"><p><p class="pi"><svg><use href="#u"/></svg><p><p>Aarav.Melton<p>Aarav.Melton@sygx2.onmicrosoft.com<p>Member<p class="cb"><i>✓</i><p class="st"><svg><use href="#bl"/></svg>Blocked<p class="g"><p>US<p><p></div>
<div class="r"><p><p class="pi"><svg><use href="#u"/></svg><p><p>Abbey.Coleman<p>Abbey.Coleman@ovh.ytria.io<p>Member<p class="cb"><i>✓</i><p class="st"><svg><use href="#bl"/></svg>Blocked<p class="g"><p>US<p><p></div>
<div class="r"><p><p class="pi"><svg><use href="#u"/></svg><p><p>Abraham Cromwel<p>Abraham.Cromwel@sygx2.onmicrosoft.com<p>Member<p class="g"><p class="st"><svg><use href="#ok"/></svg>Allowed<p class="g"><p>US<p><p></div>
<div class="r s"><p><span class="ra"><b></b></span><p class="pi"><svg><use href="#u"/></svg><p><p>Ada Carter<p>Ada.Carter@sygx2.onmicrosoft.com<p>Member<p class="g"><p class="st"><svg><use href="#oks"/></svg>Allowed<p class="g"><p>US<p><p></div>
<div class="r"><p><p class="pi"><svg><use href="#u"/></svg><p><p>Adalynn Hill<p>Adalynn.Hill@sygx2.onmicrosoft.com<p>Member<p class="cb"><i>✓</i><p class="st"><svg><use href="#bl"/></svg>Blocked<p class="g"><p>US<p><p></div>
<div class="r"><p><p class="pi"><svg><use href="#u"/></svg><p><p>Addison Langley<p>Addison.Langley@sygx2.onmicrosoft.com<p>Member<p class="cb"><i>✓</i><p class="st"><svg><use href="#ok"/></svg>Allowed<p class="g"><p>US<p><p></div>
<div class="r s"><p><span class="ra"><b></b></span><p class="pi"><svg><use href="#u"/></svg><p><p>Adele Vance<p>AdeleV@sygx2.onmicrosoft.com<p>Member<p class="g"><p class="st"><svg><use href="#oks"/></svg>Allowed<p class="rt">5/9/2025 08:57 AM<p>US<p><p></div>
<div class="r"><p><p><svg><use href="#gu"/></svg><p><p>adelev<p>adelev_x7lbv.onmicrosoft.com#EXT#@sygx2.onmicrosoft.com<p>Guest<p class="g"><p class="st"><svg><use href="#ok"/></svg>Allowed<p class="g"><p class="g"><p><p></div>
<div class="r"><p><p class="pi"><svg><use href="#u"/></svg><p><p>Aden Wade<p>Aden.Wade@sygx2.onmicrosoft.com<p>Member<p class="cb"><i>✓</i><p class="st"><svg><use href="#bl"/></svg>Blocked<p class="g"><p>US<p><p></div>
<div class="r"><p><p class="pi"><svg><use href="#u"/></svg><p><p>Adriana Morris<p>Adriana.Morris@sygx2.onmicrosoft.com<p>Member<p class="cb"><i>✓</i><p class="st"><svg><use href="#bl"/></svg>Blocked<p class="g"><p>US<p><p></div>
<div class="r s"><p><span class="ra"><b></b></span><p class="pi"><svg><use href="#u"/></svg><p><p>Adrienne Gonzalez<p>Adrienne.Gonzalez@sygx2.onmicrosoft.com<p>Member<p class="cb"><i>✓</i><p class="st"><svg><use href="#oks"/></svg>Allowed<p class="g"><p>US<p><p></div>
<div class="r"><p><p class="pi"><svg><use href="#u"/></svg><p><p>Ahmed Liu<p>Ahmed.Liu@sygx2.onmicrosoft.com<p>Member<p class="cb"><i>✓</i><p class="st"><svg><use href="#ok"/></svg>Allowed<p class="g"><p>US<p><p></div>
<div class="r"><p><span class="ra" style="background:none"><b></b></span><p class="pi"><svg><use href="#u"/></svg><p><p>Aidan Marks<p>Aidan.Marks@sygx2.onmicrosoft.com<p>Member<p class="cb"><i>✓</i><p class="st"><svg><use href="#ok"/></svg>Allowed<p class="g"><p>US<p><p></div>
<div class="r"><p><p class="pi"><svg><use href="#u"/></svg><p><p>Al Kohol<p>akohol@ovh.ytria.io<p>Member<p class="cb"><i>✓</i><p class="st"><svg><use href="#bl"/></svg>Blocked<p class="g"><p>US<p><p></div>
<div class="r"><p><p class="pi"><svg><use href="#u"/></svg><p><p>Alex Solace<p>Alex.Solace@sygx2.onmicrosoft.com<p>Member<p class="g"><p class="st"><svg><use href="#ok"/></svg>Allowed<p class="g"><p>US<p><p></div>
<div class="r"><p><p class="pi"><svg><use href="#u"/></svg><p><p>Alex Wilber<p>AlexW@sygx2.onmicrosoft.com<p>Member<p class="g"><p class="st"><svg><use href="#bl"/></svg>Blocked<p class="rt">5/5/2025 04:06 PM<p>US<p>Microsoft 365 E5 Developer<p class="rt">$45.00</div>
<div class="r"><p><p class="pi"><svg><use href="#u"/></svg><p><p>Alexander Gleason<p>Alexander.Gleason@sygx2.onmicrosoft.com<p>Member<p class="g"><p class="st"><svg><use href="#ok"/></svg>Allowed<p class="rt">5/21/2025 02:35 PM<p>US<p>Microsoft Power Automate<p class="rt">$37.00</div>
<div class="r"><p><p class="pi"><svg><use href="#u"/></svg><p><p>Alexus Holland<p>Alexus.Holland@sygx2.onmicrosoft.com<p>Member<p class="cb"><i>✓</i><p class="st"><svg><use href="#ok"/></svg>Allowed<p class="g"><p>US<p>Microsoft Power Automate<p class="rt">$37.00</div>
<div class="r"><p><p><svg><use href="#gu"/></svg><p><p>alexw<p>alexw_x7lbv.onmicrosoft.com#EXT#@sygx2.onmicrosoft.com<p>Guest<p class="g"><p class="st"><svg><use href="#ok"/></svg>Allowed<p class="g"><p class="g"><p class="g" style="color:#777">-- Unlicensed --<p class="g"></div>
<div class="r"><p><p class="pi"><svg><use href="#u"/></svg><p><p>Alfred Welcome<p>alfred.welcome@sygx2.onmicrosoft.com<p>Member<p class="cb"><i>✓</i><p class="st"><svg><use href="#ok"/></svg>Allowed<p class="rt">11/19/2024 05:14 PM<p>US<p>Microsoft 365 E5 Developer<p class="rt">$45.00</div>
<div class="r"><p><p class="pi"><svg><use href="#u"/></svg><p><p>Alice Ellis<p>Alice.Ellis@sygx2.onmicrosoft.com<p>Member<p class="g"><p class="st"><svg><use href="#ok"/></svg>Allowed<p class="g"><p>US<p>Microsoft Power Automate<p class="rt">$37.00</div>
<div class="r"><p><p class="pi"><svg><use href="#u"/></svg><p><p>Alivia Salinas<p>Alivia.Salinas@sygx2.onmicrosoft.com<p>Member<p class="cb"><i>✓</i><p class="st"><svg><use href="#ok"/></svg>Allowed<p class="g"><p>US<p>Microsoft Power Automate<p class="rt">$37.00</div>
<div class="r"><p><p class="pi"><svg><use href="#u"/></svg><p><p>Aliza Crane<p>Aliza.Crane@sygx2.onmicrosoft.com<p>Member<p class="cb"><i>✓</i><p class="st"><svg><use href="#ok"/></svg>Allowed<p class="g"><p>US<p>Microsoft Power Automate<p class="rt">$37.00</div>
<div class="r"><p><p class="pi"><svg><use href="#u"/></svg><p><p>Allan Anthony<p>Allan.Anthony@sygx2.onmicrosoft.com<p>Member<p class="cb"><i>✓</i><p class="st"><svg><use href="#bl"/></svg>Blocked<p class="g"><p>US<p>Microsoft Power Automate<p class="rt">$37.00</div>
<div class="r"><p><p><p><p><p><p><p class="g"><p><p class="g"><p class="g"><p><p></div>
</div>

<!-- Status bars -->
<div class="a" style="left:0;top:1037px;width:1920px;height:20px;background:#f8f8f8"></div>
<div class="a" style="left:7px;top:1040px;font-size:13px;line-height:16px;color:#222;white-space:nowrap">Rows Loaded: 354 | Rows Displayed: 354 | Rows Selected: 3</div>
<div class="a" style="left:0;top:1057px;width:1920px;height:20px;background:#d0d0d0"></div>
<div class="a" style="left:5px;top:1060px;font-size:12.500px;line-height:15px;color:#444;white-space:nowrap">Load sign-in info for all users at once</div>
<div class="a" style="left:1817px;top:1060px;font-size:12px;line-height:15px;color:#aaa">CAP</div>
<div class="a" style="left:1850px;top:1060px;font-size:12px;line-height:15px;color:#aaa">NUM</div>
<div class="a" style="left:1888px;top:1060px;font-size:12px;line-height:15px;color:#aaa">SCRL</div>
<div class="a" style="left:0;top:1078px;width:1920px;height:2px;background:#333"></div>
<div class="a" style="left:48px;top:1078px;width:287px;height:2px;background:#eee"></div>

<!-- Dialog -->
<div class="a" style="left:1150px;top:183px;width:502px;height:607px;background:#fff;border:1px solid #777;box-shadow:1px 1px 6px rgba(0,0,0,.15)"></div>
<div class="a" style="left:1151px;top:214px;width:500px;height:534px;background:#efefef;border-bottom:1px solid #ddd"></div>
<div class="a" style="left:1156px;top:224px;width:490px;height:493px;background:#fff"></div>
<svg class="a" style="left:1159px;top:190px" width="16" height="16"><use href="#pc"/></svg>
<div class="a" style="left:1180px;top:191px;font-size:12px;line-height:14px;color:#222">Additional Info Load Options</div>
<svg class="a" style="left:1631px;top:192px" width="11" height="11"><path d="M0 0l11 11M11 0L0 11" stroke="#222"/></svg>
<div class="a" style="left:1166px;top:228px;width:470px;height:87px;background:#f2f2f2"></div>
<div class="a" style="left:1176px;top:239px;font-size:12px;line-height:15.500px;color:#444;white-space:nowrap">Choose which additional information you'd like to refresh for selected users.<br>Processing time depends on the number of selected users and additional info<br>load options.<br><span style="color:#3f7fb5">Learn more about each option on this page.</span></div>

<div class="lbl" style="top:328px">Basic Info</div>
<div class="lbl" style="top:372px">Personal Info</div>
<div class="lbl" style="top:416px">Mailbox Settings</div>
<div class="lbl" style="top:460px">OneDrive Info</div>
<div class="lbl" style="top:548px">Sign-In Info</div>
<div class="lbl" style="top:592px">User Registration Details</div>
<div class="lbl" style="top:636px">Sponsor Info</div>
<div class="lbl" style="top:680px">MFA Info</div>

<div class="box" style="top:323px"><svg class="a" style="left:8px;top:9px" width="14" height="14"><circle cx="7" cy="7" r="5.800" fill="none" stroke="#3a6a9e" stroke-width="2"/><path d="M3 3l8 8" stroke="#3a6a9e" stroke-width="2"/></svg><div class="tr" style="left:40px"><i style="left:3px;width:35px;background:#558ddb"></i></div><div class="ho" style="left:81px;background:#c0c0c0"></div><div class="val" style="left:98px">Yes</div></div>
<div class="box" style="top:367px"><div class="ho"></div><div class="tr"><i></i></div><div class="val">No</div></div>
<div class="box" style="top:411px"><div class="ho"></div><div class="tr"><i></i></div><div class="val">No</div></div>
<div class="box" style="top:455px"><div class="ho"></div><div class="tr"><i></i></div><div class="val">No</div></div>
<div class="box" style="top:499px"><div class="ho"></div><div class="tr"><i></i></div><div class="val">No</div></div>
<div class="box" style="top:543px"><div class="tr" style="left:22px"><i style="left:3px;width:35px;background:#175098"></i></div><div class="ho" style="left:63px"></div><div class="val">Yes</div></div>
<div class="box" style="top:587px"><div class="ho"></div><div class="tr"><i></i></div><div class="val">No</div></div>
<div class="box" style="top:631px"><div class="ho"></div><div class="tr"><i></i></div><div class="val">No</div></div>
<div class="box" style="top:675px"><div class="ho"></div><div class="tr"><i></i></div><div class="val">No</div></div>

<div class="a" style="left:1422px;top:753px;width:90px;height:21px;background:#e4e4e4;border:1px solid #adadad;text-align:center;font-size:12px;line-height:19px;color:#333">OK</div>
<div class="a" style="left:1531px;top:753px;width:90px;height:21px;background:#e4e4e4;border:1px solid #adadad;text-align:center;font-size:12px;line-height:19px;color:#333">Cancel</div>
<svg class="a" style="left:1638px;top:776px" width="12" height="12"><path d="M10 2h1v1h-1zM7 5h1v1H7zM10 5h1v1h-1zM4 8h1v1H4zM7 8h1v1H7zM10 8h1v1h-1z" fill="#aaa"/></svg>

<!-- Tooltip -->
<div class="a" style="left:401px;top:151px;width:218px;height:49px;background:#fff;border:1px solid #bbb;box-shadow:2px 2px 4px rgba(0,0,0,.3)"></div>
<div class="a" style="left:412px;top:158px;font-size:12px;font-weight:bold;line-height:14px;color:#444;white-space:nowrap">Load All User sign-in info</div>
<div class="a" style="left:412px;top:179px;font-size:12px;line-height:14px;color:#555;white-space:nowrap">Load sign-in info for all users at once</div>

<!-- Annotations -->
<svg class="a" style="left:0;top:0;z-index:10" width="1920" height="1080" viewBox="0 0 1920 1080">
<g style="filter:drop-shadow(2px 2px 2px rgba(0,0,0,.35))">
<rect x="393" y="50" width="54" height="83" fill="none" stroke="#ff1fa3" stroke-width="4"/>
<path d="M421.500 133V302" stroke="#ff1fa3" stroke-width="4.500"/>
<path d="M414 299h15l-7.500 14z" fill="#ff1fa3"/>
<path d="M492 123L1146 535" stroke="#ff1fa3" stroke-width="4"/>
<path d="M1168 549l-26-5 9-14z" fill="#ff1fa3"/>
<text x="374" y="373" font-family="Liberation Sans,sans-serif" font-size="53" fill="#ff1fa3" stroke="#fff" stroke-width="6" stroke-linejoin="round" style="paint-order:stroke">ALL</text>
<text x="940" y="455" font-family="Liberation Sans,sans-serif" font-size="52" textLength="258" lengthAdjust="spacingAndGlyphs" fill="#ff1fa3" stroke="#fff" stroke-width="6" stroke-linejoin="round" style="paint-order:stroke">Alternative:</text>
<text x="887" y="515" font-family="Liberation Sans,sans-serif" font-size="52" textLength="366" lengthAdjust="spacingAndGlyphs" fill="#ff1fa3" stroke="#fff" stroke-width="6" stroke-linejoin="round" style="paint-order:stroke">Limit to selected</text>
</g>
</svg>
</body></html>
